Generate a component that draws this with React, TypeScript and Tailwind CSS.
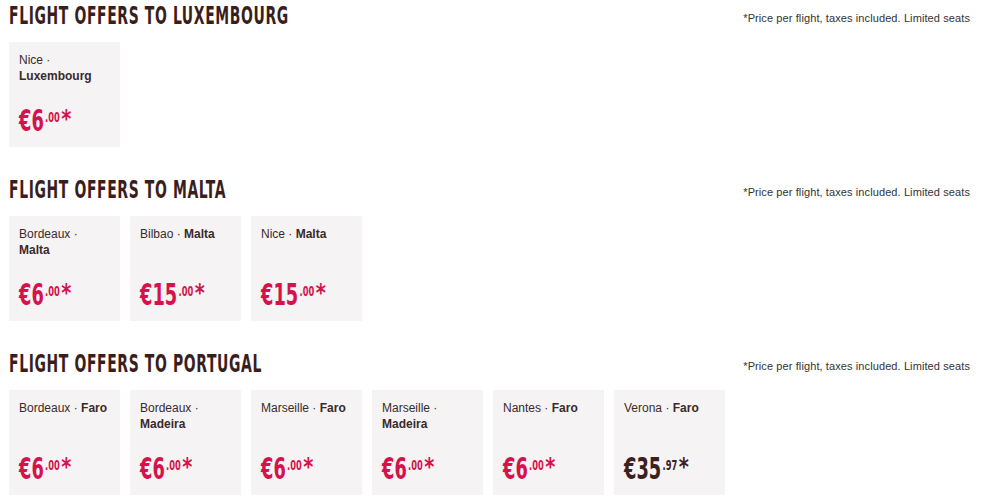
import React from 'react';

type Offer = { from: string; to: string; whole: string; cents: string; wrap?: boolean; dark?: boolean };

const sections: { country: string; offers: Offer[] }[] = [
  {
    country: 'Luxembourg',
    offers: [{ from: 'Nice', to: 'Luxembourg', whole: '€6', cents: '.00', wrap: true }],
  },
  {
    country: 'Malta',
    offers: [
      { from: 'Bordeaux', to: 'Malta', whole: '€6', cents: '.00', wrap: true },
      { from: 'Bilbao', to: 'Malta', whole: '€15', cents: '.00' },
      { from: 'Nice', to: 'Malta', whole: '€15', cents: '.00' },
    ],
  },
  {
    country: 'Portugal',
    offers: [
      { from: 'Bordeaux', to: 'Faro', whole: '€6', cents: '.00' },
      { from: 'Bordeaux', to: 'Madeira', whole: '€6', cents: '.00', wrap: true },
      { from: 'Marseille', to: 'Faro', whole: '€6', cents: '.00' },
      { from: 'Marseille', to: 'Madeira', whole: '€6', cents: '.00', wrap: true },
      { from: 'Nantes', to: 'Faro', whole: '€6', cents: '.00' },
      { from: 'Verona', to: 'Faro', whole: '€35', cents: '.97', dark: true },
    ],
  },
];

// no narrow font installed, so DejaVu condensed squeezed a bit more
const condensed = "font-['DejaVu_Sans_Condensed',sans-serif]";

function OfferCard({ offer }: { offer: Offer }) {
  const color = offer.dark ? 'text-[#3a2020]' : 'text-[#d5124b]';
  return (
    <div className="w-[111px] h-[105px] bg-[#f5f3f4] pl-[10px] pr-2 pt-[10px] flex flex-col justify-between pb-[13px]">
      <p className="text-[12px] leading-[16px] text-[#3a2a2a]">
        {offer.from} ·{offer.wrap ? <br /> : ' '}
        <span className="font-bold">{offer.to}</span>
      </p>
      <div className={`flex items-start origin-left scale-x-[0.66] ${condensed} font-bold ${color}`}>
        <span className="text-[30px] leading-[26px]">{offer.whole}</span>
        <span className="text-[14px] leading-none mt-[2px] ml-[2px]">{offer.cents}</span>
        <span className="inline-block origin-left scale-x-[1.3] text-[25px] leading-none -mt-[2px] ml-[2px]">*</span>
      </div>
    </div>
  );
}

export default function App() {
  return (
    <div className="w-[990px] bg-white pl-[9px] pr-[20px] font-['Liberation_Sans',Arial,sans-serif]">
      {sections.map((s) => (
        <section key={s.country} className="mb-[27px]">
          <div className="h-[30px] mb-[12px] flex justify-between items-center">
            <h2
              className={`${condensed} font-bold uppercase text-[25px] leading-none tracking-[1px] text-[#3a1e1e] origin-left scale-x-[0.62] whitespace-nowrap`}
            >
              Flight offers to {s.country}
            </h2>
            <p className="text-[11px] tracking-[0.1px] text-[#333] mt-[6px]">*Price per flight, taxes included. Limited seats</p>
          </div>
          <div className="flex gap-[10px]">
            {s.offers.map((o, i) => (
              <OfferCard key={i} offer={o} />
            ))}
          </div>
        </section>
      ))}
    </div>
  );
}
